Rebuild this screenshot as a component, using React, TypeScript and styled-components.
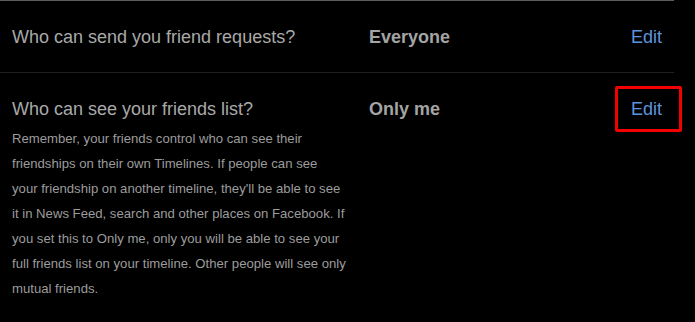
import styled, { createGlobalStyle } from "styled-components";

const GlobalStyle = createGlobalStyle`
  html, body {
    margin: 0;
    padding: 0;
    background: #000;
  }
  body {
    font-family: "Liberation Sans", Arial, sans-serif;
  }
`;

const Root = styled.div`
  min-height: 100vh;
  background: #000;
`;

const Panel = styled.section`
  width: 674px;
  border-top: 1px solid #5e5e5e;
`;

const Row = styled.div<{ $last?: boolean }>`
  display: grid;
  grid-template-columns: 335px 1fr auto;
  column-gap: 22px;
  align-items: start;
  padding: 24px 12px ${p => (p.$last ? "0" : "23px")} 12px;
  border-bottom: ${p => (p.$last ? "none" : "1px solid #1f1f1f")};
`;

const Label = styled.div`
  font-size: 18px;
  line-height: 24px;
  color: #a9a9a9;
`;

const Help = styled.p`
  margin: 5px 0 0;
  max-width: 334px;
  font-size: 13.15px;
  line-height: 25px;
  color: #9c9c9c;
`;

const Value = styled.div`
  font-size: 18px;
  line-height: 24px;
  font-weight: bold;
  color: #a4a4a4;
`;

const Edit = styled.a<{ $highlighted?: boolean }>`
  position: relative;
  font-size: 18px;
  line-height: 24px;
  color: #5b94dc;
  text-decoration: none;
  cursor: pointer;

  ${p =>
    p.$highlighted &&
    `
    &::after {
      content: "";
      position: absolute;
      top: -11px;
      bottom: -11px;
      left: -16px;
      right: -20px;
      border: 3px solid #f50000;
      border-radius: 2px;
    }
  `}
`;

export default function App() {
  return (
    <Root>
      <GlobalStyle />
      <Panel>
        <Row>
          <Label>Who can send you friend requests?</Label>
          <Value>Everyone</Value>
          <Edit>Edit</Edit>
        </Row>
        <Row $last>
          <div>
            <Label>Who can see your friends list?</Label>
            <Help>
              Remember, your friends control who can see their friendships on their own
              Timelines. If people can see your friendship on another timeline, they'll be
              able to see it in News Feed, search and other places on Facebook. If you set
              this to Only me, only you will be able to see your full friends list on your
              timeline. Other people will see only mutual friends.
            </Help>
          </div>
          <Value>Only me</Value>
          <Edit $highlighted>Edit</Edit>
        </Row>
      </Panel>
    </Root>
  );
}
